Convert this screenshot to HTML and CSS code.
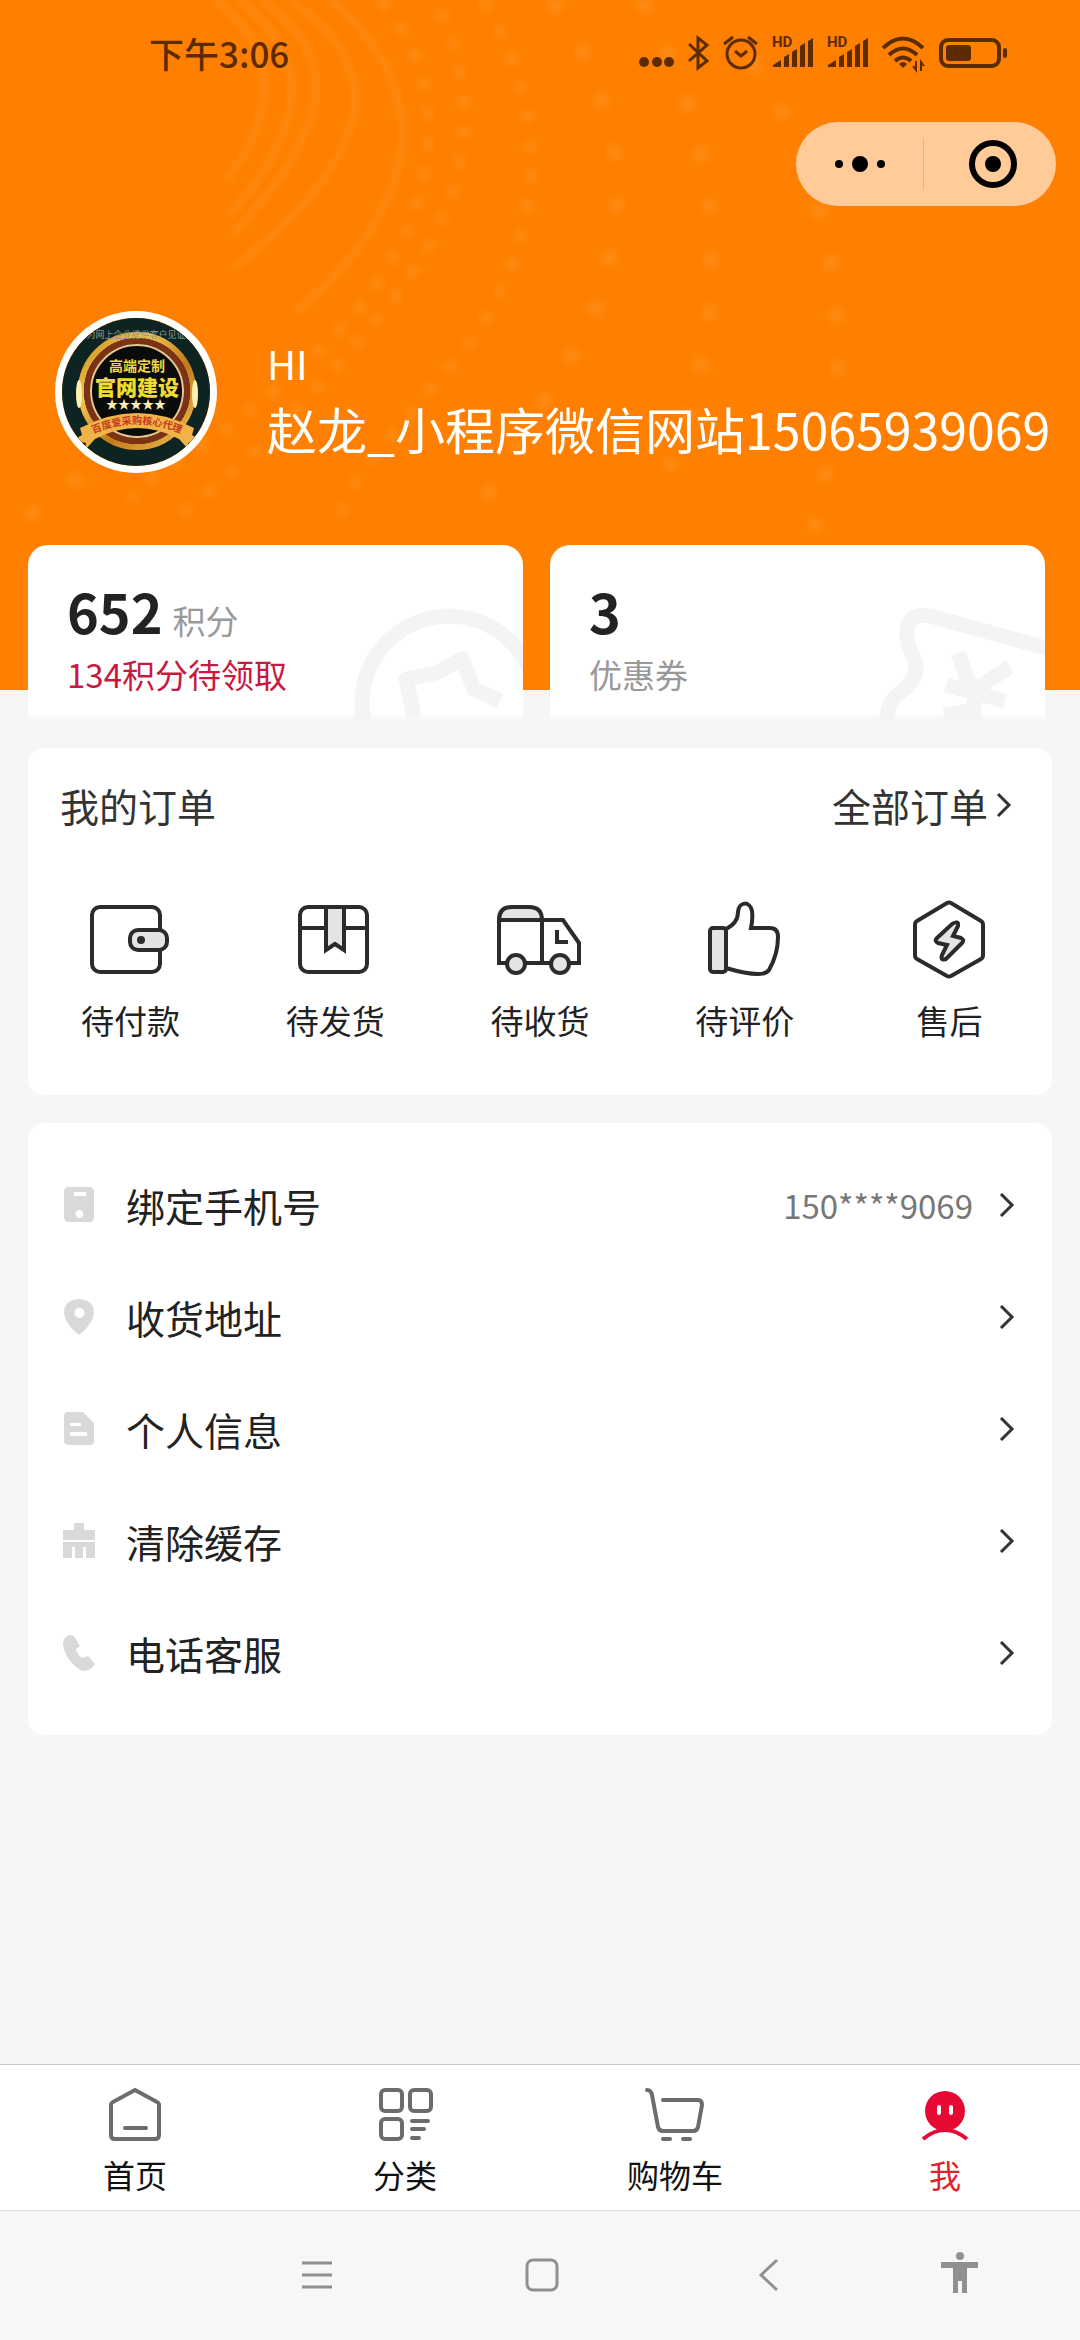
FILE: index.html
```html
<!DOCTYPE html>
<html lang="zh-CN">
<head>
  <meta charset="UTF-8">
  <meta name="viewport" content="width=device-width, initial-scale=1">
  <title>我的</title>
  <link rel="stylesheet" href="styles.css">
</head>
<body>

<header class="header">
  <svg class="swirl" viewBox="0 0 1080 690" preserveAspectRatio="xMinYMin slice" aria-hidden="true">
    <g class="swirl-lines">
      <path d="M215 0C270 40 285 100 227 180"/>
      <path d="M240 0C300 50 320 110 230 215"/>
      <path d="M262 0C345 60 330 130 232 235"/>
      <path d="M289 0C395 70 370 160 234 268"/>
      <path d="M330 0C440 90 420 210 296 312"/>
    </g>
    <g class="swirl-dots">
      <path d="M380 0C460 90 440 230 330 340S160 460 130 500"/>
      <path d="M440 10C480 100 480 200 372 326S220 482 172 522"/>
      <path d="M482 0C560 120 540 260 454 362S350 480 340 520"/>
    </g>
    <g class="swirl-dots far">
      <path d="M551 0C630 110 640 240 571 357S490 490 468 531"/>
      <path d="M640 0C730 150 730 330 668 469"/>
      <path d="M750 60C840 190 860 360 813 531"/>
      <path d="M120 440C90 470 50 500 25 520"/>
    </g>
  </svg>

  <div class="status-bar">
    <span class="time">下午3:06</span>
    <div class="status-icons">
      <svg width="35" height="36" viewBox="0 0 35 36" fill="currentColor"><circle cx="5" cy="27" r="5"/><circle cx="18" cy="27" r="5"/><circle cx="30" cy="27" r="5"/></svg>
      <svg width="21" height="36" viewBox="0 0 21 36" fill="none" stroke="currentColor" stroke-width="3"><path d="M1 9l18 17-9 7V3l9 7L1 26"/></svg>
      <svg width="35" height="36" viewBox="0 0 35 36" fill="none" stroke="currentColor" stroke-width="3"><circle cx="18" cy="19" r="14"/><path d="M12 16l6 5 6-5M1 9l9-7M34 9l-9-7"/></svg>
      <svg width="41" height="36" viewBox="0 0 41 36" fill="currentColor"><text class="hd" x="0" y="12">HD</text><path d="M1 32v-2l8-5v7zM12 32V22l5-3v13zM20 32V17l5-3v18zM28 32V11l5-3v24zM36 32V6l5-3v29z"/></svg>
      <svg width="41" height="36" viewBox="0 0 41 36" fill="currentColor"><text class="hd" x="0" y="12">HD</text><path d="M1 32v-2l8-5v7zM12 32V22l5-3v13zM20 32V17l5-3v18zM28 32V11l5-3v24zM36 32V6l5-3v29z"/></svg>
      <svg width="43" height="36" viewBox="0 0 43 36" fill="none" stroke="currentColor" stroke-width="4"><path d="M1 13q20-19 40 0M7 20q14-13 28 0M13 26q8-7 16 0"/><path d="M21 33l-4-4q4-4 8 0z" fill="currentColor" stroke="none"/><path d="M34 26v9l-3-4M39 36v-9l3 4" stroke-width="2"/></svg>
      <svg width="68" height="36" viewBox="0 0 68 36"><rect x="2" y="5" width="58" height="26" rx="7" fill="none" stroke="currentColor" stroke-width="4"/><rect x="7" y="10" width="25" height="16" rx="3" fill="currentColor"/><rect x="64" y="13" width="4" height="10" rx="2" fill="currentColor"/></svg>
    </div>
  </div>

  <div class="capsule">
    <button class="capsule-btn" aria-label="更多">
      <svg width="50" height="50" viewBox="0 0 50 50"><circle cx="4" cy="25" r="4"/><circle cx="25" cy="25" r="8"/><circle cx="46" cy="25" r="4"/></svg>
    </button>
    <button class="capsule-btn" aria-label="关闭">
      <svg width="50" height="50" viewBox="0 0 50 50"><circle cx="25" cy="25" r="21" fill="none" stroke="#000" stroke-width="6"/><circle cx="25" cy="25" r="8"/></svg>
    </button>
  </div>

  <div class="profile">
    <svg class="avatar" viewBox="0 0 148 148">
      <defs>
        <linearGradient id="gold" x1="0" y1="0" x2="1" y2="1">
          <stop offset="0" stop-color="#c98a1c"/>
          <stop offset=".3" stop-color="#f3c44c"/>
          <stop offset=".6" stop-color="#c47a1a"/>
          <stop offset="1" stop-color="#f0c050"/>
        </linearGradient>
        <path id="ribbon" d="M26 118Q75 94 124 118"/>
      </defs>
      <rect width="148" height="148" fill="#0d2422"/>
      <circle cx="75" cy="73" r="53" fill="#0a0c0c"/>
      <circle cx="75" cy="73" r="56" fill="none" stroke="url(#gold)" stroke-width="6"/>
      <circle cx="75" cy="73" r="50" fill="none" stroke="#7d3216" stroke-width="6"/>
      <circle cx="75" cy="73" r="46" fill="none" stroke="#e8c890" stroke-width="2"/>
      <ellipse cx="17" cy="76" rx="3" ry="14" fill="#fff0b0"/>
      <ellipse cx="133" cy="76" rx="3" ry="14" fill="#fff0b0"/>
      <text class="avatar-top" x="74" y="20">为网上企业提供客户见证</text>
      <text class="avatar-small" x="75" y="53">高端定制</text>
      <text class="avatar-big" x="75" y="77">官网建设</text>
      <text class="avatar-stars" x="74" y="91">★★★★★</text>
      <path d="M18 110Q75 80 132 110L130 117 138 122 126 125 127 132 117 121Q75 99 33 121L23 132 24 125 12 122 20 117z" fill="#efb348"/>
      <text class="avatar-ribbon"><textPath href="#ribbon" startOffset="50%">百度爱采购核心代理</textPath></text>
    </svg>
    <div class="profile-text">
      <div class="hi">HI</div>
      <div class="nickname">赵龙_小程序微信网站15065939069</div>
    </div>
  </div>
</header>

<main>
  <section class="stats">
    <a class="stat" href="#">
      <svg class="stat-mark" width="180" height="120" viewBox="315 57 180 120" aria-hidden="true">
        <circle cx="421" cy="160" r="87"/>
        <path d="M386 174L378 136 408 130 434 116 446 146 472 158" stroke-linejoin="round"/>
      </svg>
      <div class="stat-top"><strong>652</strong><span>积分</span></div>
      <div class="stat-note red">134积分待领取</div>
    </a>
    <a class="stat" href="#">
      <svg class="stat-mark" width="180" height="120" viewBox="315 57 180 120" aria-hidden="true">
        <path d="M337 177Q337 158 352 148T366 120Q350 90 362 76Q368 70 384 74L496 105"/>
        <path d="M408 110L422 148 460 124M396 142L455 158M424 148V177M394 172L420 168" />
      </svg>
      <div class="stat-top"><strong>3</strong></div>
      <div class="stat-note">优惠券</div>
    </a>
  </section>

  <section class="card orders">
    <div class="orders-head">
      <h2>我的订单</h2>
      <a class="all-orders" href="#">全部订单<svg class="chevron" viewBox="0 0 16 26"><path d="M2 2l11 11L2 24"/></svg></a>
    </div>
    <nav class="order-list">
      <a href="#">
        <svg viewBox="0 0 90 90"><rect x="7" y="12" width="68" height="65" rx="8"/><rect class="tint" x="45" y="35" width="37" height="20" rx="8"/><circle cx="56" cy="45" r="2"/></svg>
        待付款
      </a>
      <a href="#">
        <svg viewBox="0 0 90 90"><rect x="10" y="12" width="67" height="65" rx="8"/><path d="M10 33h67"/><path class="tint" d="M36 12v43l9-6 9 6V12z"/></svg>
        待发货
      </a>
      <a href="#">
        <svg viewBox="0 0 90 90"><path class="tint" d="M4 25q0-13 13-13h17q13 0 13 13z"/><path d="M4 25v43h43V25M47 25h21l16 23v20H47M62 35v12h11"/><circle class="tint" cx="21" cy="69" r="9"/><circle class="tint" cx="65" cy="69" r="9"/></svg>
        待收货
      </a>
      <a href="#">
        <svg viewBox="0 0 90 90"><rect class="tint" x="10" y="33" width="16" height="44" rx="3"/><path d="M26 34C34 30 38 24 38 17C39 6 50 6 52 16Q53 24 51 33H70Q78 33 78 42C78 56 73 68 69 75Q66 79 58 79C46 79 36 76 26 73"/></svg>
        待评价
      </a>
      <a href="#">
        <svg viewBox="0 0 90 90"><path d="M42 8q2-1 4 0l30 18q2 1 2 4v30q0 3-2 4L46 81q-2 1-4 0L12 64q-2-1-2-4V30q0-3 2-4z"/><path class="tint" d="M47 29q7-4 6 2l-5 10 8 2q4 2 1 5L41 64q-6 2-4-4l5-10-9-2q-4-2-1-5z"/></svg>
        售后
      </a>
    </nav>
  </section>

  <section class="card menu">
    <a class="menu-row" href="#">
      <svg class="menu-icon" viewBox="0 0 36 36"><path fill-rule="evenodd" d="M9 0h20q5 0 5 5v25q0 5-5 5H9q-5 0-5-5V5q0-5 5-5zM14 5v4h12V5zM19 23a4 4 0 1 0 1 0z"/></svg>
      <span class="menu-name">绑定手机号</span>
      <span class="menu-value">150****9069</span>
      <svg class="chevron" viewBox="0 0 16 26"><path d="M2 2l11 11L2 24"/></svg>
    </a>
    <a class="menu-row" href="#">
      <svg class="menu-icon" viewBox="0 0 36 36"><path fill-rule="evenodd" d="M19 0Q34 1 34 14Q33 25 19 36Q5 25 4 14Q4 1 19 0zM19 9a5 5 0 1 0 1 0z"/></svg>
      <span class="menu-name">收货地址</span>
      <svg class="chevron" viewBox="0 0 16 26"><path d="M2 2l11 11L2 24"/></svg>
    </a>
    <a class="menu-row" href="#">
      <svg class="menu-icon" viewBox="0 0 36 36"><path fill-rule="evenodd" d="M8 1h15l11 11v18q0 4-4 4H8q-4 0-4-4V5q0-4 4-4zM10 12v3h11v-3zM10 21v4h17v-4z"/></svg>
      <span class="menu-name">个人信息</span>
      <svg class="chevron" viewBox="0 0 16 26"><path d="M2 2l11 11L2 24"/></svg>
    </a>
    <a class="menu-row" href="#">
      <svg class="menu-icon" viewBox="0 0 36 36"><path d="M14 0h10v7h11v10H3V7h11zM3 19h32v16h-9V24h-3v11h-8V24h-3v11H3z"/></svg>
      <span class="menu-name">清除缓存</span>
      <svg class="chevron" viewBox="0 0 16 26"><path d="M2 2l11 11L2 24"/></svg>
    </a>
    <a class="menu-row" href="#">
      <svg class="menu-icon" viewBox="0 0 36 36"><path d="M10 0l4 1 6 10-4 3q0 4 6 9l6-2 7 8q-4 7-12 7Q6 28 3 9 3 2 10 0z"/></svg>
      <span class="menu-name">电话客服</span>
      <svg class="chevron" viewBox="0 0 16 26"><path d="M2 2l11 11L2 24"/></svg>
    </a>
  </section>
</main>

<nav class="tabbar">
  <a href="#">
    <svg viewBox="0 0 60 60"><path d="M30 5l22 12q2 1 2 3v30q0 4-4 4H10q-4 0-4-4V20q0-2 2-3zM20 43h21"/></svg>
    首页
  </a>
  <a href="#">
    <svg viewBox="0 0 60 60"><rect x="6" y="5" width="21" height="21" rx="4"/><rect x="35" y="5" width="21" height="21" rx="4"/><rect x="6" y="34" width="21" height="20" rx="4"/><path d="M37 36h16M37 44h12M37 53h7"/></svg>
    分类
  </a>
  <a href="#">
    <svg viewBox="0 0 60 60"><path d="M2 5q4 0 5 5l6 32q1 4 5 4h30q4 0 5-4l4-22q0-5-4-5H18M18 54h7M38 54h7"/></svg>
    购物车
  </a>
  <a class="active" href="#">
    <svg viewBox="0 0 60 60"><circle class="head" cx="30" cy="26" r="20"/><path class="eyes" d="M24 22v6M36 22v6"/><path d="M8 54q22-18 44 0"/></svg>
    我
  </a>
</nav>

<div class="system-nav">
  <button aria-label="最近任务"><svg viewBox="0 0 44 44"><path d="M7 9h30M7 21h30M7 33h30"/></svg></button>
  <button aria-label="主屏幕"><svg viewBox="0 0 44 44"><rect x="7" y="6" width="30" height="30" rx="6"/></svg></button>
  <button aria-label="返回"><svg viewBox="0 0 44 44"><path d="M30 6L14 21l16 15"/></svg></button>
  <button aria-label="无障碍"><svg viewBox="0 0 44 44"><path class="solid" d="M3 8h37v6H29v25h-5V27h-4v12h-5V14H3z"/><circle class="solid" cx="22" cy="2" r="4"/></svg></button>
</div>

</body>
</html>
```
FILE: styles.css
```css
* { box-sizing: border-box; }
body {
  font-family: "Noto Sans CJK SC", sans-serif;
  background: #f6f6f6;
  color: #222;
  margin: 0;
  min-height: 100vh;
  display: flex;
  flex-direction: column;
}
a { color: inherit; text-decoration: none; }
button {
  border: none;
  background: none;
  padding: 0;
  cursor: pointer;
}
svg { display: block; flex-shrink: 0; }
main { flex: 1; }

/* header */
.header {
  position: relative;
  background: #ff8000;
  padding-bottom: 217px;
}
.swirl {
  position: absolute;
  top: 0;
  left: 0;
  width: 100%;
  height: 100%;
  fill: none;
  stroke: #fff;
}
.swirl-lines { stroke-width: 8; opacity: 0.05; filter: blur(2px); }
.swirl-dots {
  stroke-width: 11;
  stroke-dasharray: 12 18;
  opacity: 0.07;
  filter: blur(3px);
}
.swirl-dots.far {
  stroke-width: 14;
  stroke-dasharray: 15 38;
}
.status-bar {
  position: relative;
  display: flex;
  justify-content: space-between;
  align-items: center;
  height: 106px;
  padding: 0 73px 0 149px;
  color: #5c2c00;
}
.time {
  font-size: 35px;
  font-weight: 500;
  line-height: 48px;
}
.status-icons { display: flex; gap: 14px; }
.status-icons svg { overflow: visible; }
.hd {
  font-family: Roboto, sans-serif;
  font-size: 15px;
  font-weight: 700;
}
.capsule {
  position: relative;
  display: flex;
  width: 260px;
  height: 84px;
  margin: 16px 24px 0 auto;
  border-radius: 42px;
  background: #ffcc99;
}
.capsule-btn {
  flex: 1;
  display: flex;
  align-items: center;
  justify-content: center;
}
.capsule-btn + .capsule-btn {
  padding-left: 6px;
  background: linear-gradient(#e8b582, #e8b582) left center / 1px 52px no-repeat;
}
.profile {
  position: relative;
  display: flex;
  align-items: flex-end;
  margin-top: 105px;
  padding-left: 55px;
}
.avatar {
  width: 162px;
  height: 162px;
  border: 7px solid #fff;
  border-radius: 50%;
}
.avatar text { text-anchor: middle; font-weight: 700; }
.avatar .avatar-top { font-size: 9px; font-weight: 400; fill: #8a9794; }
.avatar .avatar-small { font-size: 14px; fill: #f0d840; }
.avatar .avatar-big { font-size: 21px; font-weight: 900; fill: #f0dc30; }
.avatar .avatar-stars { font-size: 12px; fill: #fff0b8; }
.avatar .avatar-ribbon { font-size: 10px; fill: #c8381c; }
.profile-text {
  margin-left: 50px;
  padding-bottom: 5px;
  color: #fff;
  white-space: nowrap;
}
.hi { font-size: 40px; line-height: 50px; }
.nickname { font-size: 50px; line-height: 80px; }

/* points and coupons */
.stats {
  position: relative;
  display: grid;
  grid-template-columns: 1fr 1fr;
  gap: 27px;
  margin-top: -145px;
  padding: 0 35px 0 28px;
}
.stat {
  position: relative;
  overflow: hidden;
  height: 175px;
  padding: 29px 39px 0;
  border-radius: 20px 20px 0 0;
  background: linear-gradient(#fff 168px, #f6f6f6 175px);
}
.stat-mark {
  position: absolute;
  right: 0;
  bottom: 0;
  fill: none;
  stroke: #f4f4f5;
  stroke-width: 15;
}
.stat-top {
  position: relative;
  display: flex;
  align-items: baseline;
  gap: 10px;
  height: 74px;
}
.stat-top strong {
  font-size: 54px;
  line-height: 74px;
}
.stat-top span { font-size: 33px; color: #999; }
.stat-note {
  position: relative;
  font-size: 33px;
  line-height: 52px;
  color: #999;
}
.stat-note.red { color: #c8193f; }

/* cards */
.card {
  margin: 28px 28px 0;
  border-radius: 16px;
  background: #fff;
}
.chevron {
  width: 16px;
  height: 26px;
  fill: none;
  stroke: #333;
  stroke-width: 3;
}
.orders { padding-bottom: 50px; }
.orders-head {
  display: flex;
  justify-content: space-between;
  align-items: center;
  height: 114px;
  padding: 0 40px 0 32px;
  font-size: 39px;
  color: #333;
}
.orders-head h2 {
  margin: 0;
  font-size: 39px;
  font-weight: 400;
}
.all-orders { display: flex; align-items: center; gap: 8px; }
.order-list {
  display: grid;
  grid-template-columns: repeat(5, 1fr);
  padding-top: 33px;
}
.order-list a {
  display: flex;
  flex-direction: column;
  align-items: center;
  gap: 10px;
  font-size: 33px;
  line-height: 50px;
}
.order-list svg {
  width: 90px;
  height: 90px;
  fill: none;
  stroke: #2b2b2b;
  stroke-width: 4;
}
.order-list .tint { fill: #e4e4e4; }

.menu { padding: 26px 0; }
.menu-row {
  display: flex;
  align-items: center;
  height: 112px;
  padding: 0 37px 0 32px;
}
.menu-icon {
  width: 36px;
  height: 36px;
  margin-right: 30px;
  fill: #d9d9d9;
}
.menu-name { flex: 1; font-size: 39px; }
.menu-value {
  margin-right: 26px;
  font-size: 33px;
  color: #777;
}

/* bottom bars */
.tabbar {
  display: grid;
  grid-template-columns: repeat(4, 1fr);
  height: 147px;
  padding-top: 20px;
  border-top: 1px solid #c8c8c8;
  border-bottom: 1px solid #ddd;
  background: #fff;
  color: #111;
}
.tabbar a {
  display: flex;
  flex-direction: column;
  align-items: center;
  gap: 5px;
  font-size: 32px;
  line-height: 48px;
}
.tabbar svg {
  width: 60px;
  height: 60px;
  fill: none;
  stroke: #6c6c6c;
  stroke-width: 4;
  stroke-linecap: round;
}
.tabbar .active { color: #e0242c; }
.tabbar .active svg { stroke: #e60a32; stroke-linecap: butt; }
.tabbar .head { fill: #e60a32; stroke: none; }
.tabbar .eyes { stroke: #fff; stroke-linecap: round; }
.system-nav {
  display: grid;
  grid-template-columns: 225fr 225fr 230fr 154fr;
  place-items: center;
  height: 129px;
  padding: 0 4% 0 19%;
  background: #f7f7f7;
}
.system-nav svg {
  width: 44px;
  height: 44px;
  overflow: visible;
  fill: none;
  stroke: #909090;
  stroke-width: 3;
}
.system-nav .solid { fill: #909090; stroke: none; }
```
